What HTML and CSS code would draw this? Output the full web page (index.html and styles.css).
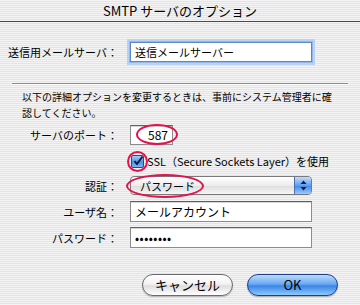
FILE: index.html
```html
<!DOCTYPE html>
<html>
<head>
  <meta charset="utf-8">
  <title>SMTP サーバのオプション</title>
  <link rel="stylesheet" href="styles.css">
</head>
<body>
  <div class="titlebar">SMTP サーバのオプション</div>
  <div class="content">
    <div class="row">
      <div class="label">送信用メールサーバ：</div>
      <div class="field focused">送信メールサーバー</div>
    </div>
    <div class="sep"></div>
    <p class="note">以下の詳細オプションを変更するときは、事前にシステム管理者に確<br>認してください。</p>
    <div class="row port-row">
      <div class="label">サーバのポート：</div>
      <div class="field port">587<span class="mark mark-port"></span></div>
    </div>
    <div class="row check-row">
      <div class="label"></div>
      <div class="checkbox">
        <svg width="12" height="12" viewBox="0 0 12 12"><path d="M2.5 6.2 L5 9 L10.5 1.5" fill="none" stroke="#0a1a3a" stroke-width="1.8"/></svg>
        <span class="mark mark-check"></span>
      </div>
      <span class="check-label">SSL（Secure Sockets Layer）を使用</span>
    </div>
    <div class="row popup-row">
      <div class="label">認証：</div>
      <div class="popup">
        <span class="popup-text">パスワード</span>
        <span class="popup-cap">
          <svg width="7" height="11" viewBox="0 0 7 11"><path d="M3.5 0.5 L6.5 4 L0.5 4 Z M0.5 7 L6.5 7 L3.5 10.5 Z" fill="#10204a"/></svg>
        </span>
        <span class="mark mark-popup"></span>
      </div>
    </div>
    <div class="row user-row">
      <div class="label">ユーザ名：</div>
      <div class="field">メールアカウント</div>
    </div>
    <div class="row pass-row">
      <div class="label">パスワード：</div>
      <div class="field dots">••••••••</div>
    </div>
    <div class="buttons">
      <div class="btn cancel">キャンセル</div>
      <div class="btn ok">OK</div>
    </div>
  </div>
</body>
</html>
```

FILE: styles.css
```css
body {
  margin: 0;
  width: 360px;
  height: 305px;
  overflow: hidden;
  background: repeating-linear-gradient(to bottom, #f4f4f4 0 1px, #e4e4e4 1px 2px);
  font-family: "Noto Sans CJK JP", "Liberation Sans", sans-serif;
  font-size: 11px;
  color: #000;
}
.titlebar {
  height: 21px;
  line-height: 22px;
  border-bottom: 1px solid #4a4a4a;
  border-radius: 5px 5px 0 0;
  text-align: center;
  font-size: 13px;
}
.content { padding-top: 20px; }
.row { display: flex; align-items: center; }
.label {
  width: 118px;
  margin-right: 12px;
  text-align: right;
  white-space: nowrap;
}
.field {
  position: relative;
  width: 172px;
  height: 18px;
  line-height: 18px;
  padding: 0 4px;
  background: #fff;
  border: 1px solid #8c8c8c;
  border-top-color: #5e5e5e;
  box-shadow: inset 0 1px 0 #d8d8d8;
  white-space: nowrap;
}
.field.focused {
  box-shadow: 0 0 0 1px #93b8ea, 0 0 0 3px #b9d2f2;
  border-color: #5d88c8;
}
.sep {
  height: 1px;
  margin: 21px 12px 0;
  background: #8a8a8a;
  border-bottom: 1px solid #fff;
}
.note {
  margin: 4px 0 0 22px;
  font-size: 10px;
  line-height: 16px;
  white-space: nowrap;
}
.port-row { margin-top: 4px; }
.field.port {
  width: 33px;
  text-align: right;
  font-size: 12px;
}
.check-row { margin-top: 10px; height: 12px; }
.checkbox {
  position: relative;
  width: 11px;
  height: 11px;
  margin-left: 1px;
  border: 1px solid #2d4a80;
  border-radius: 2px;
  background: linear-gradient(#a8cdf8, #4d8fe6 55%, #7cb4f6);
}
.checkbox svg { position: absolute; left: 0; top: -1px; }
.check-label { margin-left: 3px; white-space: nowrap; }
.popup-row { margin-top: 9px; }
.popup {
  position: relative;
  display: flex;
  align-items: center;
  width: 180px;
  height: 17px;
  border: 1px solid #7a7a7a;
  border-radius: 4px;
  background: linear-gradient(#ffffff, #ececec 50%, #dcdcdc 51%, #f6f6f6);
}
.popup-text { flex: 1; padding-left: 9px; }
.popup-cap {
  display: flex;
  align-items: center;
  justify-content: center;
  width: 16px;
  height: 17px;
  border-left: 1px solid #4b6fae;
  border-radius: 0 3px 3px 0;
  background: linear-gradient(#c4dcfb, #5d9ef0 50%, #3f86e8 51%, #9ccaff);
}
.user-row { margin-top: 6px; }
.user-row .field, .pass-row .field { height: 19px; line-height: 19px; font-size: 12px; }
.pass-row { margin-top: 5px; }
.dots { font-size: 10px; letter-spacing: 0.5px; }
.buttons {
  display: flex;
  justify-content: flex-end;
  gap: 14px;
  margin-top: 26px;
  padding-right: 22px;
}
.btn {
  width: 89px;
  height: 20px;
  line-height: 20px;
  border-radius: 11px;
  text-align: center;
  font-size: 13px;
}
.cancel {
  border: 1px solid #6a6a6a;
  background: linear-gradient(#ffffff, #f2f2f2 45%, #dedede 55%, #ffffff);
  box-shadow: 0 1px 1px rgba(0, 0, 0, 0.25);
}
.ok {
  border: 1px solid #1d3f8a;
  background: linear-gradient(#bcdcfd, #6aa9f2 45%, #3c85e6 55%, #8ccaff);
  box-shadow: 0 1px 1px rgba(0, 0, 0, 0.3);
}
.mark {
  position: absolute;
  border: 2px solid #e3134c;
  border-radius: 50%;
  box-sizing: border-box;
}
.mark-port { left: 5px; top: -2px; width: 42px; height: 21px; }
.mark-check { left: -5px; top: -5px; width: 21px; height: 21px; }
.mark-popup { left: -5px; top: -3px; width: 78px; height: 24px; }
```
